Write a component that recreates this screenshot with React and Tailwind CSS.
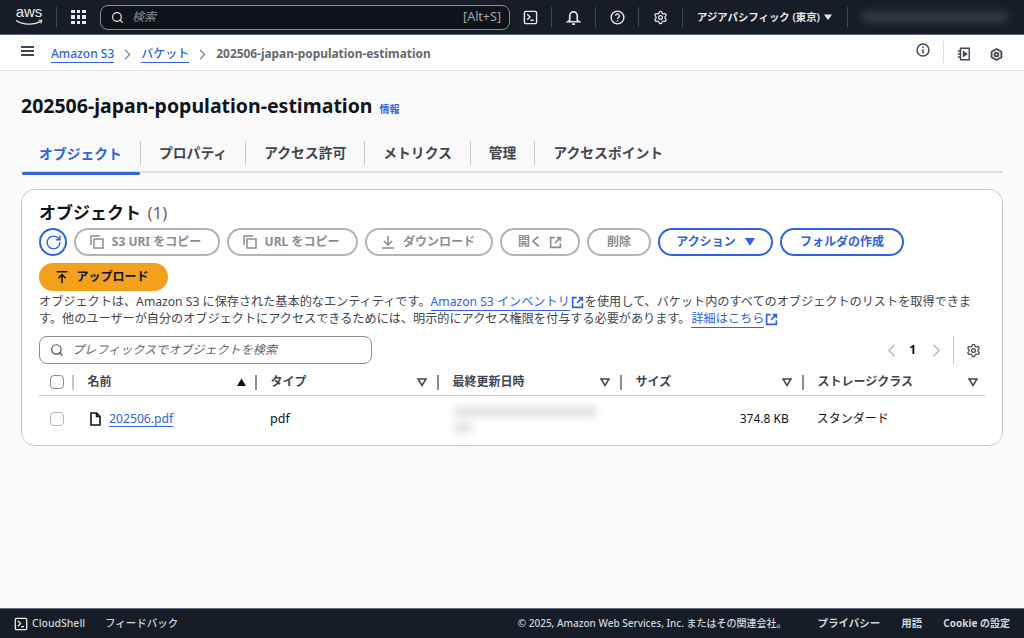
import { ChevronLeft, ChevronRight, RotateCw, Search, Settings } from "lucide-react";

const font = "font-['Noto_Sans','Noto_Sans_CJK_JP',sans-serif]";

function TerminalIcon({ className }) {
  return (
    <svg className={className} viewBox="0 0 16 16" fill="none" stroke="currentColor" strokeWidth="1.5">
      <rect x="1.5" y="1.5" width="13" height="13" rx="1.5" />
      <path d="M4.5 4.5 7.5 7.5 4.5 10.5M8 11h3.5" />
    </svg>
  );
}

function CopyIcon() {
  return (
    <svg className="h-4 w-4" viewBox="0 0 16 16" fill="none" stroke="currentColor" strokeWidth="1.5">
      <path d="M2 11V2h9" />
      <rect x="5" y="5" width="9" height="9" />
    </svg>
  );
}

function ExternalIcon({ className }) {
  return (
    <svg className={className} viewBox="0 0 16 16" fill="none" stroke="currentColor" strokeWidth="2">
      <path d="M7 2H2v12h12V9M9.5 2H14v4.5M14 2 7.5 8.5" />
    </svg>
  );
}

function SortDown() {
  return (
    <svg className="block h-3 w-3 text-[#424650]" viewBox="0 0 12 12" fill="none" stroke="currentColor" strokeWidth="1.5">
      <path d="M2 3h8L6 9.5z" />
    </svg>
  );
}

function HeaderCell({ label, sort, className }) {
  return (
    <div className={`flex items-center ${className}`}>
      <span className="text-[12px] font-bold text-[#424650]">{label}</span>
      <span className="ml-auto">{sort || <SortDown />}</span>
      <span className="mx-[9px] block h-[15px] w-[1.5px] bg-[#8c8c94]" />
    </div>
  );
}

function GreyButton({ children, className }) {
  return (
    <button
      type="button"
      className={`flex h-7 items-center justify-center gap-[7px] rounded-full border-2 border-[#b4b4bb] text-[12px] font-bold text-[#8c8c94] ${className}`}
    >
      {children}
    </button>
  );
}

function Divider({ className }) {
  return <span className={`block h-[20px] w-px bg-[#414750] ${className}`} />;
}

function TopBar() {
  return (
    <header className="flex h-[35px] items-center border-b border-[#5f6b7a] bg-[#161d26] pl-[15px] text-white">
      <div className="relative flex h-[28px] w-[28px] flex-col items-center">
        <span className="font-['Liberation_Sans',sans-serif] text-[15px] leading-[17px] text-[#e9e9ea]">aws</span>
        <svg className="absolute top-[16px] h-[7px] w-[28px]" viewBox="0 0 28 7" fill="none">
          <path d="M1 1.5C8 6 19 6.5 26 2" stroke="#e9e9ea" strokeWidth="1.3" />
          <path d="M23.5 1.2 27 1.2 25.8 4.5" stroke="#e9e9ea" strokeWidth="1" />
        </svg>
      </div>
      <Divider className="ml-[13px]" />
      <div className="ml-[14px] grid h-[14px] w-[15px] grid-cols-3 gap-[2px]">
        {Array.from({ length: 9 }).map((_, i) => (
          <span key={i} className="bg-[#e9e9ea]" />
        ))}
      </div>
      <div className="ml-[14px] flex h-[25px] w-[410px] items-center rounded-[8px] border-[1.5px] border-[#8c8c94] bg-[#0f141a] pl-[10px] pr-[8px]">
        <Search className="h-[13px] w-[13px] text-[#e9e9ea]" strokeWidth={2.2} />
        <span className="ml-[8px] text-[12px] italic text-[#8c8c94]">検索</span>
        <span className="ml-auto text-[12.5px] text-[#a4a4ad]">[Alt+S]</span>
      </div>
      <TerminalIcon className="ml-[13px] h-[15px] w-[15px] text-[#e9e9ea]" />
      <Divider className="ml-[13px]" />
      <svg className="ml-[14px] h-[15px] w-[15px] text-[#e9e9ea]" viewBox="0 0 16 16" fill="none" stroke="currentColor" strokeWidth="1.8">
        <path d="M4 11V6a4 4 0 0 1 8 0v5l2 1.5H2zM6.5 15h3" />
      </svg>
      <Divider className="ml-[14px]" />
      <svg className="ml-[14px] h-[15px] w-[15px] text-[#e9e9ea]" viewBox="0 0 16 16" fill="none" stroke="currentColor" strokeWidth="1.5">
        <circle cx="8" cy="8" r="6.8" />
        <path d="M6 6.2a2 2 0 1 1 3 1.8c-.7.4-1 .8-1 1.6M8 11v1.3" />
      </svg>
      <Divider className="ml-[13px]" />
      <Settings className="ml-[14px] h-[15px] w-[15px] text-[#e9e9ea]" strokeWidth={2} />
      <Divider className="ml-[14px]" />
      <span className="ml-[14px] text-[10.4px] font-semibold leading-none text-[#e9e9ea]">アジアパシフィック (東京)</span>
      <svg className="ml-[4px] h-2 w-2 text-[#e9e9ea]" viewBox="0 0 8 8" fill="currentColor">
        <path d="M0 1.5h8L4 7z" />
      </svg>
      <Divider className="ml-[15px]" />
      <div className="ml-[14px] h-[10px] w-[146px] rounded-sm bg-[#5a616c] opacity-50 blur-[4px]" />
    </header>
  );
}

function BreadcrumbBar() {
  return (
    <nav className="flex h-[36px] items-center border-b border-[#dedee3] bg-white pl-[21px] pr-[21px] pt-[3px] text-[12px]">
      <div className="flex h-[10px] w-[13px] -translate-y-[3px] flex-col justify-between">
        <span className="h-[2px] bg-[#424650]" />
        <span className="h-[2px] bg-[#424650]" />
        <span className="h-[2px] bg-[#424650]" />
      </div>
      <a className="ml-[17px] border-b border-[#2f64e0] font-medium leading-[17px] text-[#2f64e0]">Amazon S3</a>
      <ChevronRight className="mx-[5px] h-[17px] w-[17px] text-[#8c8c94]" strokeWidth={2} />
      <a className="border-b border-[#2f64e0] font-medium leading-[17px] text-[#2f64e0]">バケット</a>
      <ChevronRight className="mx-[5px] h-[17px] w-[17px] text-[#8c8c94]" strokeWidth={2} />
      <span className="text-[11.9px] font-bold text-[#656871]">202506-japan-population-estimation</span>
      <div className="ml-auto flex items-center">
        <svg className="h-[14px] w-[14px] -translate-y-[4px] text-[#424650]" viewBox="0 0 16 16" fill="none" stroke="currentColor" strokeWidth="1.7">
          <circle cx="8" cy="8" r="6.8" />
          <path d="M8 7v5M8 4v1.6" />
        </svg>
        <span className="ml-[13px] block h-[22px] w-px -translate-y-[2px] bg-[#dedee3]" />
        <svg className="ml-[13px] h-[14px] w-[14px] text-[#424650]" viewBox="0 0 16 16" fill="none" stroke="currentColor" strokeWidth="1.6">
          <path d="M4 1.5h10v13H4zM1 4.5h3M1 8h3M1 11.5h3" />
          <path d="M7.5 5.5 11 8l-3.5 2.5z" fill="currentColor" />
        </svg>
        <svg className="ml-[19px] h-[13px] w-[13px] text-[#424650]" viewBox="0 0 16 16" fill="none" stroke="currentColor" strokeWidth="2.2">
          <path d="M8 1.3 14 4.6v6.8l-6 3.3-6-3.3V4.6z" />
          <circle cx="8" cy="8" r="2.4" />
        </svg>
      </div>
    </nav>
  );
}

function Tabs() {
  const tabs = ["プロパティ", "アクセス許可", "メトリクス", "管理", "アクセスポイント"];
  return (
    <div className="mt-[10px] flex h-[39px] border-b-2 border-[#dedee3]">
      <div className="relative flex h-[39px] w-[119px] items-center justify-center pt-[2px] text-[13.8px] font-bold text-[#2f64e0]">
        オブジェクト
        <span className="absolute bottom-[-2px] left-[1px] right-0 h-[3px] rounded-full bg-[#2f64e0]" />
      </div>
      {tabs.map((tab) => (
        <div key={tab} className="flex h-[37px] items-center">
          <span className="block h-[24px] w-px bg-[#c6c6cd]" />
          <span className="px-[18px] pt-[2px] text-[13.8px] font-bold text-[#424650]">{tab}</span>
        </div>
      ))}
    </div>
  );
}

function ObjectsCard() {
  return (
    <section className="mt-[16px] h-[257px] rounded-[14px] border border-[#c6c6cd] bg-white pl-[17px] pr-[17px] pt-[11px]">
      <h2 className="text-[17px] font-bold leading-[24px] text-[#0f141a]">
        オブジェクト <span className="ml-[2px] font-normal text-[#656871]">(1)</span>
      </h2>
      <div className="mt-[3px] flex flex-wrap items-center gap-x-[7px] gap-y-[7px]">
        <button type="button" className="flex h-7 w-7 items-center justify-center rounded-full border-2 border-[#2f64e0] text-[#2f64e0]">
          <RotateCw className="h-[17px] w-[17px]" strokeWidth={2} />
        </button>
        <GreyButton className="w-[146px] pr-[4px]"><CopyIcon /> S3 URI をコピー</GreyButton>
        <GreyButton className="w-[131px] pr-[4px]"><CopyIcon /> URL をコピー</GreyButton>
        <GreyButton className="w-[128px] pr-[3px]">
          <svg className="h-4 w-4" viewBox="0 0 16 16" fill="none" stroke="currentColor" strokeWidth="1.5">
            <path d="M8 2v9M4 7l4 4 4-4M2 14h12" />
          </svg>
          ダウンロード
        </GreyButton>
        <GreyButton className="w-[80px]">開く <ExternalIcon className="h-[13px] w-[13px]" /></GreyButton>
        <GreyButton className="w-[64px]">削除</GreyButton>
        <button type="button" className="flex h-7 w-[115px] items-center justify-center gap-[9px] rounded-full border-2 border-[#2f64e0] text-[12px] font-bold text-[#2f64e0]">
          アクション
          <svg className="h-[9px] w-[10px]" viewBox="0 0 10 9" fill="currentColor"><path d="M0 0h10L5 8z" /></svg>
        </button>
        <button type="button" className="flex h-7 w-[124px] items-center justify-center rounded-full border-2 border-[#2f64e0] text-[12px] font-bold text-[#2f64e0]">
          フォルダの作成
        </button>
        <button type="button" className="flex h-7 w-[129px] items-center justify-center gap-[7px] rounded-full bg-[#f3a01f] pr-[3px] text-[12px] font-bold text-[#0f141a]">
          <svg className="h-[14px] w-[14px]" viewBox="0 0 16 16" fill="none" stroke="currentColor" strokeWidth="1.7">
            <path d="M2 2h12M8 15V5.5M3.8 9.5 8 5.3l4.2 4.2" />
          </svg>
          アップロード
        </button>
      </div>
      <p className="mt-[2px] w-[940px] text-[12.15px] leading-[17px] text-[#424650]">
        オブジェクトは、Amazon S3 に保存された基本的なエンティティです。
        <a className="border-b border-[#2f64e0] text-[#2f64e0]">Amazon S3 インベントリ</a>
        <ExternalIcon className="mx-[1px] inline h-[13px] w-[13px] text-[#2f64e0]" />
        を使用して、バケット内のすべてのオブジェクトのリストを取得できます。他のユーザーが自分のオブジェクトにアクセスできるためには、明示的にアクセス権限を付与する必要があります。
        <a className="ml-[1px] border-b border-[#2f64e0] text-[#2f64e0]">詳細はこちら</a>
        <ExternalIcon className="ml-[1px] inline h-[13px] w-[13px] text-[#2f64e0]" />
      </p>
      <div className="mt-[9px] flex items-center">
        <div className="flex h-[28px] w-[333px] items-center rounded-[8px] border border-[#8c8c94] bg-white pl-[10px]">
          <Search className="h-[14px] w-[14px] text-[#424650]" strokeWidth={2} />
          <span className="ml-[8px] text-[12.1px] italic text-[#656871]">プレフィックスでオブジェクトを検索</span>
        </div>
        <div className="ml-auto flex items-center pr-[4px]">
          <ChevronLeft className="h-[21px] w-[21px] text-[#b4b4bb]" strokeWidth={1.6} />
          <span className="ml-[7px] mr-[10px] text-[12px] font-bold text-[#0f141a]">1</span>
          <ChevronRight className="h-[21px] w-[21px] text-[#b4b4bb]" strokeWidth={1.6} />
          <span className="ml-[6px] block h-[28px] w-px bg-[#c6c6cd]" />
          <Settings className="ml-[12px] h-[15px] w-[15px] text-[#424650]" strokeWidth={2} />
        </div>
      </div>
      <div className="mt-[7px] flex h-[25px] items-center border-b border-[#c6c6cd] pb-[2px] pr-[6px]">
        <span className="ml-[11px] block h-[14px] w-[14px] rounded-[4px] border border-[#8c8c94] bg-white" />
        <span className="ml-[8px] block h-[15px] w-[1.5px] bg-[#c6c6cd]" />
        <HeaderCell
          label="名前"
          className="ml-[14px] w-[178px]"
          sort={<svg className="block h-[9px] w-[9px] text-[#0f141a]" viewBox="0 0 10 9" fill="currentColor"><path d="M5 0l5 8.5H0z" /></svg>}
        />
        <HeaderCell label="タイプ" className="ml-[5px] w-[177px]" />
        <HeaderCell label="最終更新日時" className="ml-[5px] w-[178px]" />
        <HeaderCell label="サイズ" className="ml-[5px] w-[177px]" />
        <div className="ml-[5px] flex flex-1 items-center">
          <span className="text-[12px] font-bold text-[#424650]">ストレージクラス</span>
          <span className="ml-auto"><SortDown /></span>
        </div>
      </div>
      <div className="flex h-[46px] items-center">
        <span className="ml-[11px] block h-[14px] w-[14px] rounded-[4px] border border-[#b4b4bb] bg-white" />
        <svg className="ml-[25px] h-[14px] w-[13px] text-[#0f141a]" viewBox="0 0 13 14" fill="none" stroke="currentColor" strokeWidth="1.6">
          <path d="M2 1h5.5L11 4.5V13H2zM7.5 1v3.5H11" />
        </svg>
        <a className="ml-[7px] w-[161px] text-[12.2px] leading-[16px] text-[#2f64e0] [text-decoration:underline] [text-underline-offset:3px]">202506.pdf</a>
        <span className="text-[12.5px] text-[#0f141a]">pdf</span>
        <div className="ml-[164px] w-[143px]">
          <div className="h-[9px] w-[143px] bg-[#c6c6cd] opacity-60 blur-[4px]" />
          <div className="mt-[7px] h-[9px] w-[18px] bg-[#c6c6cd] opacity-60 blur-[4px]" />
        </div>
        <span className="ml-[65px] w-[127px] text-right text-[12px] text-[#0f141a]">374.8 KB</span>
        <span className="ml-[28px] text-[12px] text-[#0f141a]">スタンダード</span>
      </div>
    </section>
  );
}

function Footer() {
  return (
    <footer className="flex h-[30px] items-center border-t border-[#5f6b7a] bg-[#161d26] pl-[14px] pr-[14px] text-[10.5px] font-medium text-[#d1d5db]">
      <TerminalIcon className="h-[14px] w-[14px] text-[#e9e9ea]" />
      <span className="ml-[4px]">CloudShell</span>
      <span className="ml-[20px]">フィードバック</span>
      <span className="ml-auto text-[10px]">© 2025, Amazon Web Services, Inc. またはその関連会社。</span>
      <span className="ml-[31px] font-bold">プライバシー</span>
      <span className="ml-[21px] font-bold">用語</span>
      <span className="ml-[21px] text-[10px] font-bold">Cookie の設定</span>
    </footer>
  );
}

export default function App() {
  return (
    <div className={`flex h-[638px] w-[1024px] flex-col overflow-hidden bg-[#fafafa] ${font}`}>
      <TopBar />
      <BreadcrumbBar />
      <main className="flex-1 px-[21px]">
        <h1 className="mt-[20px] flex items-baseline text-[19.5px] font-bold leading-[30px] text-[#0f141a]">
          202506-japan-population-estimation
          <a className="ml-[7px] text-[10px] font-bold text-[#2f64e0]">情報</a>
        </h1>
        <Tabs />
        <ObjectsCard />
      </main>
      <Footer />
    </div>
  );
}
